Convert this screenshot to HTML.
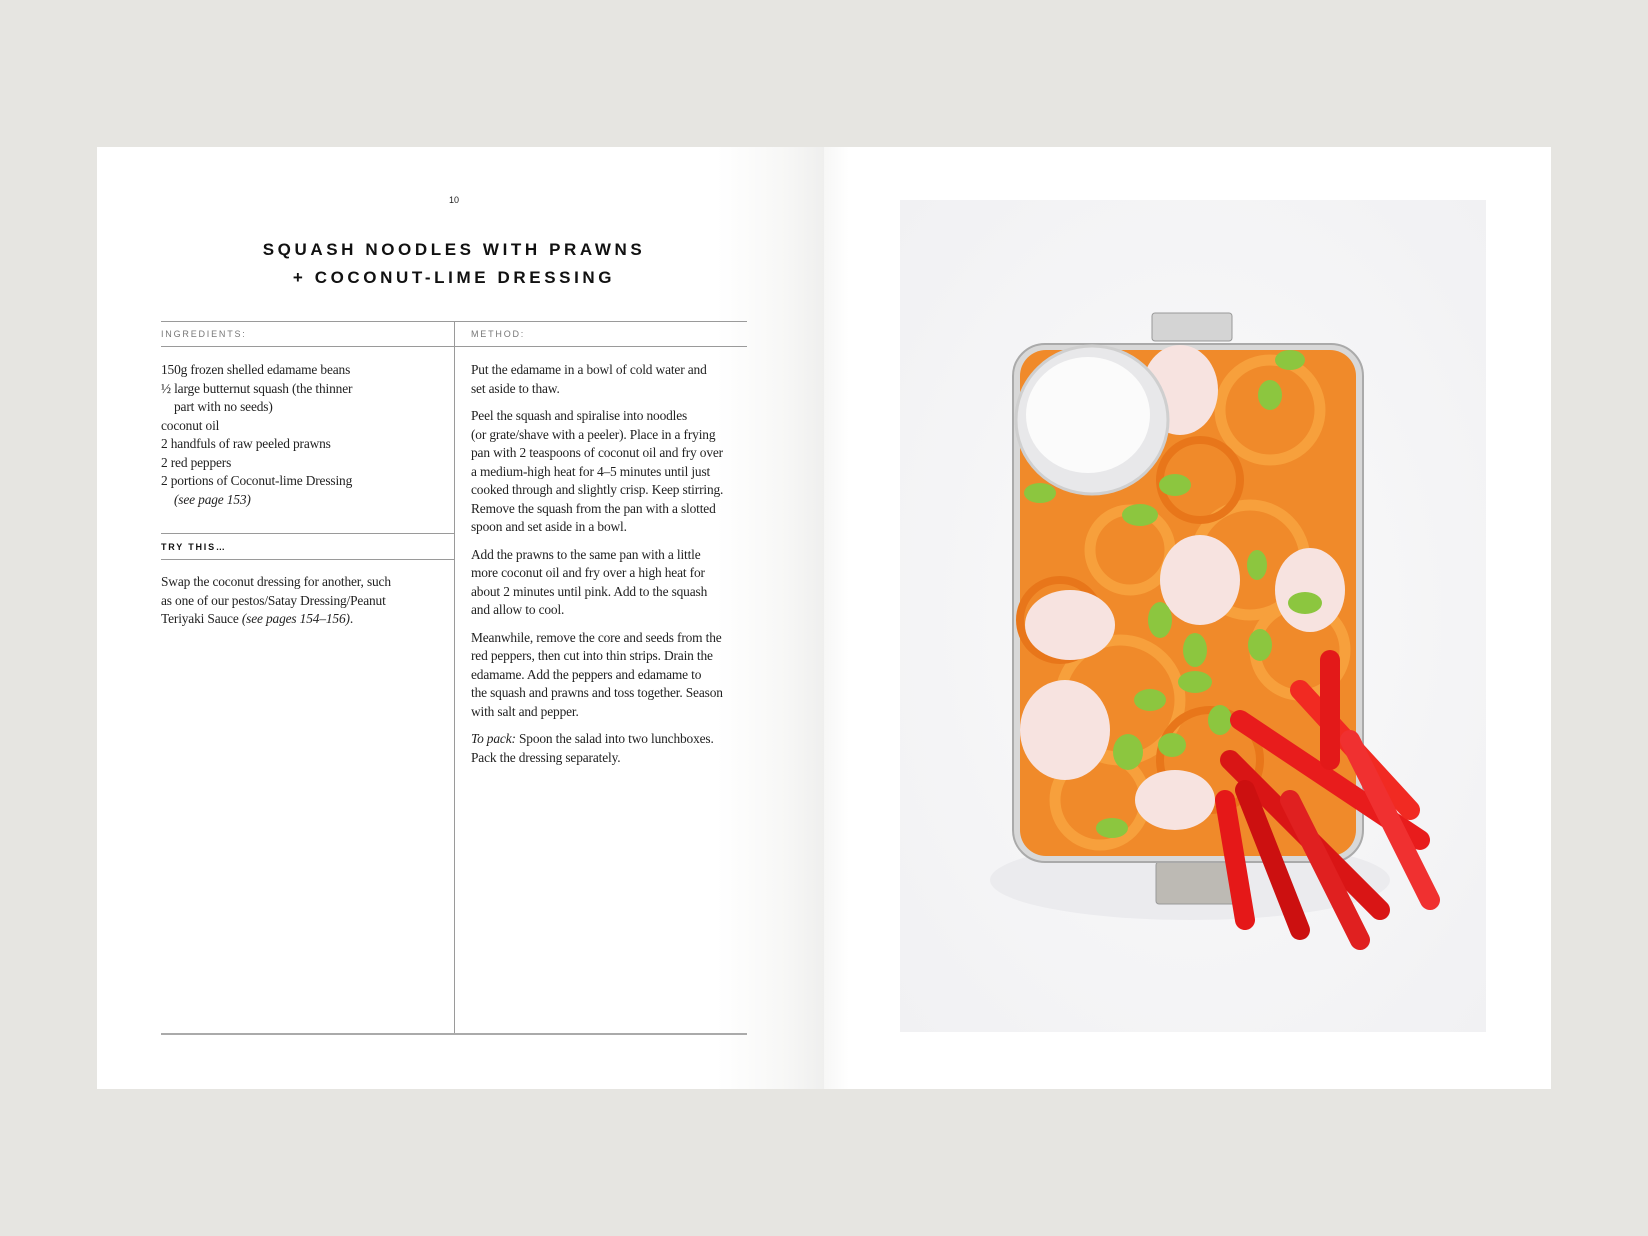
<!DOCTYPE html>
<html><head><meta charset="utf-8"><style>
body{margin:0;width:1648px;height:1236px;background:#e6e5e1;position:relative;overflow:hidden;font-family:"Liberation Serif",serif;color:#222}
.page{position:absolute;top:147px;height:942px;background:#fff}
#lp{left:97px;width:727px;background:linear-gradient(to right,#fff 0,#fff 620px,#f7f7f6 690px,#efefee 727px)}
#rp{left:824px;width:727px;background:linear-gradient(to right,#f7f7f6 0,#fff 25px)}
.abs{position:absolute}
.hl{position:absolute;height:1px;background:#9a9a9a}
.lab{position:absolute;font-family:"Liberation Sans",sans-serif;font-size:9px;letter-spacing:1.8px;color:#777}
.tx{position:absolute;font-size:13.4px;line-height:18.5px;color:#222;letter-spacing:-0.15px}
.tx p{margin:0 0 9px}
.ind{padding-left:13px}
</style></head><body>
<div class="page" id="lp"></div>
<div class="page" id="rp"></div>
<div class="abs" style="left:444px;top:195px;width:20px;text-align:center;font-family:'Liberation Sans',sans-serif;font-size:9px">10</div>
<div class="abs" style="left:161px;width:586px;top:236px;text-align:center;font-family:'Liberation Sans',sans-serif;font-weight:bold;font-size:17px;letter-spacing:3.6px;line-height:28px;color:#111">SQUASH NOODLES WITH PRAWNS<br>+ COCONUT-LIME DRESSING</div>
<div class="hl" style="left:161px;width:586px;top:321px"></div>
<div class="hl" style="left:161px;width:586px;top:346px"></div>
<div class="hl" style="left:161px;width:293px;top:533px"></div>
<div class="hl" style="left:161px;width:293px;top:559px"></div>
<div class="hl" style="left:161px;width:586px;top:1033px;height:2px;background:#aaa"></div>
<div class="abs" style="left:454px;top:321px;width:1px;height:712px;background:#9a9a9a"></div>
<div class="lab" style="left:161px;top:329px">INGREDIENTS:</div>
<div class="lab" style="left:471px;top:329px">METHOD:</div>
<div class="lab" style="left:161px;top:542px;font-weight:bold;color:#111">TRY THIS…</div>
<div class="tx" style="left:161px;top:361px;width:285px">150g frozen shelled edamame beans<br>½ large butternut squash (the thinner<br><span class="ind">part with no seeds)</span><br>coconut oil<br>2 handfuls of raw peeled prawns<br>2 red peppers<br>2 portions of Coconut-lime Dressing<br><span class="ind"><i>(see page 153)</i></span></div>
<div class="tx" style="left:161px;top:573px;width:285px">Swap the coconut dressing for another, such<br>as one of our pestos/Satay Dressing/Peanut<br>Teriyaki Sauce <i>(see pages 154–156)</i>.</div>
<div class="tx" style="left:471px;top:361px;width:280px">
<p>Put the edamame in a bowl of cold water and<br>set aside to thaw.</p>
<p>Peel the squash and spiralise into noodles<br>(or grate/shave with a peeler). Place in a frying<br>pan with 2 teaspoons of coconut oil and fry over<br>a medium-high heat for 4–5 minutes until just<br>cooked through and slightly crisp. Keep stirring.<br>Remove the squash from the pan with a slotted<br>spoon and set aside in a bowl.</p>
<p>Add the prawns to the same pan with a little<br>more coconut oil and fry over a high heat for<br>about 2 minutes until pink. Add to the squash<br>and allow to cool.</p>
<p>Meanwhile, remove the core and seeds from the<br>red peppers, then cut into thin strips. Drain the<br>edamame. Add the peppers and edamame to<br>the squash and prawns and toss together. Season<br>with salt and pepper.</p>
<p><i>To pack:</i> Spoon the salad into two lunchboxes.<br>Pack the dressing separately.</p>
</div>
<svg class="abs" style="left:900px;top:200px" width="586" height="832" viewBox="900 200 586 832">
<defs><radialGradient id="bg" cx="0.5" cy="0.5" r="0.7"><stop offset="0" stop-color="#fafafb"/><stop offset="1" stop-color="#f1f1f3"/></radialGradient></defs>
<rect x="900" y="200" width="586" height="832" fill="url(#bg)"/>
<ellipse cx="1190" cy="880" rx="200" ry="40" fill="#ebebee"/>
<rect x="1152" y="313" width="80" height="28" rx="3" fill="#d4d4d4" stroke="#999"/>
<rect x="1156" y="862" width="80" height="42" rx="3" fill="#bdbab4" stroke="#999"/>
<rect x="1013" y="344" width="350" height="518" rx="32" fill="#d8d8d8" stroke="#aaa" stroke-width="2"/>
<rect x="1020" y="350" width="336" height="506" rx="26" fill="#f08a2a"/>
<g fill="none" stroke="#f7a03c" stroke-width="11">
<circle cx="1270" cy="410" r="50"/><circle cx="1250" cy="560" r="55"/><circle cx="1120" cy="700" r="60"/><circle cx="1130" cy="550" r="40"/><circle cx="1300" cy="650" r="45"/><circle cx="1100" cy="800" r="45"/></g>
<g fill="none" stroke="#e8761a" stroke-width="8">
<circle cx="1200" cy="480" r="40"/><circle cx="1060" cy="620" r="40"/><circle cx="1210" cy="760" r="50"/></g>
<g fill="#f7e3e0"><ellipse cx="1180" cy="390" rx="38" ry="45"/><ellipse cx="1200" cy="580" rx="40" ry="45"/><ellipse cx="1310" cy="590" rx="35" ry="42"/><ellipse cx="1070" cy="625" rx="45" ry="35"/><ellipse cx="1065" cy="730" rx="45" ry="50"/><ellipse cx="1175" cy="800" rx="40" ry="30"/></g>
<g fill="#8cc63f"><ellipse cx="1290" cy="360" rx="15" ry="10"/><ellipse cx="1270" cy="395" rx="12" ry="15"/><ellipse cx="1040" cy="493" rx="16" ry="10"/><ellipse cx="1175" cy="485" rx="16" ry="11"/><ellipse cx="1140" cy="515" rx="18" ry="11"/><ellipse cx="1257" cy="565" rx="10" ry="15"/><ellipse cx="1305" cy="603" rx="17" ry="11"/><ellipse cx="1160" cy="620" rx="12" ry="18"/><ellipse cx="1195" cy="650" rx="12" ry="17"/><ellipse cx="1260" cy="645" rx="12" ry="16"/><ellipse cx="1195" cy="682" rx="17" ry="11"/><ellipse cx="1150" cy="700" rx="16" ry="11"/><ellipse cx="1128" cy="752" rx="15" ry="18"/><ellipse cx="1172" cy="745" rx="14" ry="12"/><ellipse cx="1112" cy="828" rx="16" ry="10"/><ellipse cx="1220" cy="720" rx="12" ry="15"/></g>
<ellipse cx="1092" cy="420" rx="76" ry="74" fill="#e8e8ea" stroke="#cfcfcf" stroke-width="3"/>
<ellipse cx="1088" cy="415" rx="62" ry="58" fill="#fbfbfb"/>
<g stroke-linecap="round" stroke-width="20">
<line x1="1240" y1="720" x2="1420" y2="840" stroke="#e81c1c"/>
<line x1="1230" y1="760" x2="1380" y2="910" stroke="#d91515"/>
<line x1="1300" y1="690" x2="1410" y2="810" stroke="#f12a22"/>
<line x1="1330" y1="660" x2="1330" y2="760" stroke="#e31919"/>
<line x1="1245" y1="790" x2="1300" y2="930" stroke="#cc1010"/>
<line x1="1290" y1="800" x2="1360" y2="940" stroke="#e02020"/>
<line x1="1225" y1="800" x2="1245" y2="920" stroke="#e51818"/>
<line x1="1350" y1="740" x2="1430" y2="900" stroke="#f03030"/>
</g>
</svg>
</body></html>
